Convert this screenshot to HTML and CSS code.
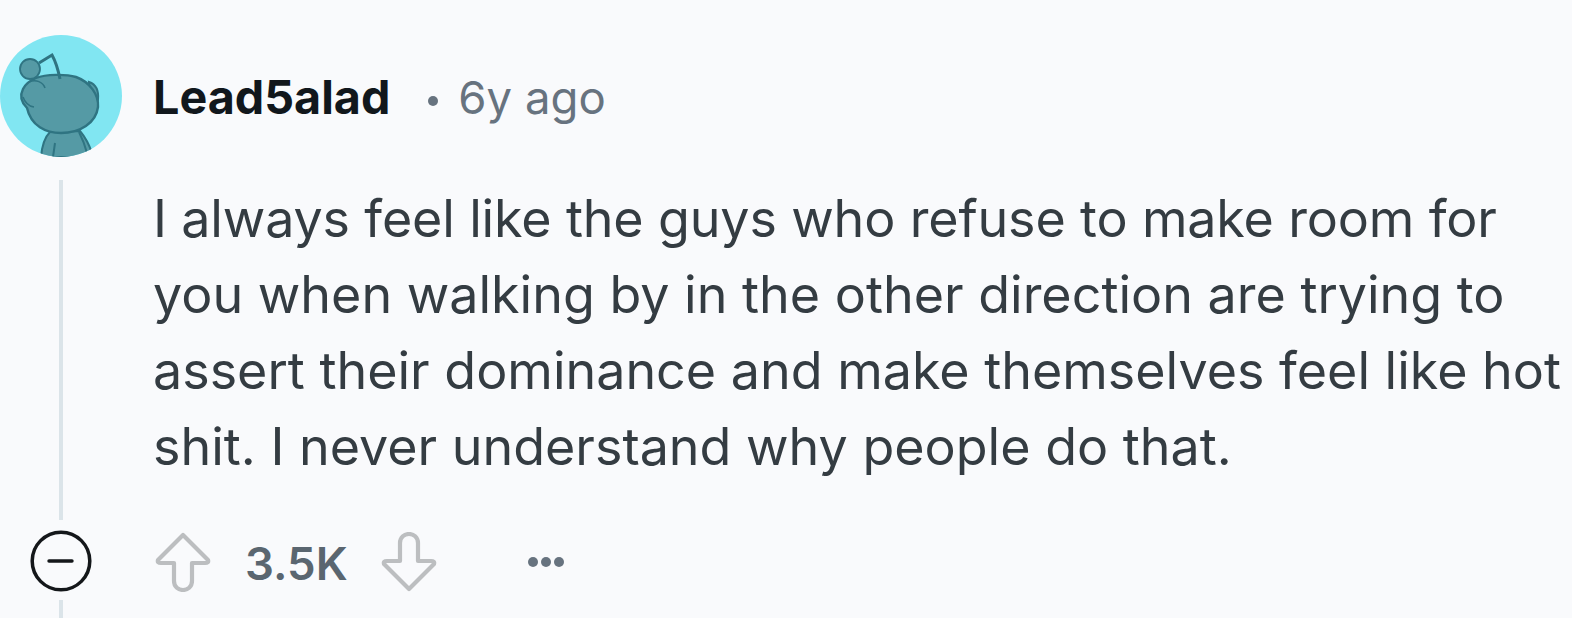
FILE: index.html
```html
<!DOCTYPE html>
<html lang="en">
<head>
<meta charset="utf-8">
<title>Comment</title>
<link rel="stylesheet" href="styles.css">
</head>
<body>
<main class="comment">
  <div class="rail">
    <svg class="avatar" viewBox="0 0 122 122" width="122" height="122">
      <defs><clipPath id="c"><circle cx="61" cy="61" r="61"/></clipPath></defs>
      <g clip-path="url(#c)">
        <rect width="122" height="122" fill="#81e6f2"/>
        <path d="M41 122 C42 110 45 102 50 97 L80 96 C85 102 89 109 92 118 L92 122Z" fill="#559aa5" stroke="#2f7482" stroke-width="2"/>
        <path d="M55 108 L53 122 M79 97 C82 103 85 110 87 118" stroke="#2f7482" stroke-width="2" fill="none"/>
        <path d="M89 47 C95 49 99 55 98 65 L92 72Z" fill="#559aa5" stroke="#2f7482" stroke-width="2"/>
        <path d="M36 43 C46 39 66 39 76 42 C90 47 99 60 98 72 C96 88 80 98 61 98 C46 98 31 91 27 73 C21 67 20 60 23 54 C26 48 31 45 36 43Z" fill="#559aa5" stroke="#2f7482" stroke-width="2.400"/>
        <path d="M29 47 C36 44 43 47 45 53 M23 62 C25 68 28 71 34 72" stroke="#2f7482" stroke-width="1.600" fill="none"/>
        <path d="M39 28 L52 20 Q57 29 60 44" stroke="#2f7482" stroke-width="3" fill="none"/>
        <circle cx="30" cy="34" r="10" fill="#559aa5" stroke="#2f7482" stroke-width="1.800"/>
      </g>
    </svg>
    <div class="thread thread-top"></div>
    <button class="collapse" type="button" aria-label="Collapse">
      <svg viewBox="0 0 62 62" width="62" height="62"><circle cx="31" cy="31" r="28.800" fill="none" stroke="#14171a" stroke-width="3.500"/><path d="M19 31H42" stroke="#14171a" stroke-width="3.400" stroke-linecap="round"/></svg>
    </button>
    <div class="thread thread-bottom"></div>
  </div>
  <div class="body">
    <header class="meta">
      <span class="author">Lead5alad</span>
      <span class="dot"></span>
      <span class="age">6y ago</span>
    </header>
    <p class="text"><span class="first-line">I always feel like the guys who refuse to make room for</span><br>you when walking by in the other direction are trying to<br>assert their dominance and make themselves feel like hot<br>shit. I never understand why people do that.</p>
    <footer class="actions">
      <svg class="vote" viewBox="0 0 56 60" width="56" height="60"><path d="M28 3 L53 28 Q54 31 50 31 H37 V49 C37 61 19 61 19 49 V31 H6 Q2 31 3 28Z" fill="none" stroke="#bcbec0" stroke-width="4.200" stroke-linejoin="round"/></svg>
      <span class="score">3.5K</span>
      <svg class="vote down" viewBox="0 0 56 60" width="56" height="60"><path d="M28 57 L53 32 Q54 29 50 29 H37 V11 C37 -1 19 -1 19 11 V29 H6 Q2 29 3 32Z" fill="none" stroke="#bcbec0" stroke-width="4.200" stroke-linejoin="round"/></svg>
      <div class="more"><span></span><span></span><span></span></div>
    </footer>
  </div>
</main>
</body>
</html>
```
FILE: styles.css
```css
html, body {
  margin: 0;
  padding: 0;
  height: 100%;
  background: #f9fafc;
  overflow: hidden;
}
.comment {
  display: flex;
  padding-top: 35px;
  font-family: Inter, "Liberation Sans", sans-serif;
}
.rail {
  width: 122px;
  flex: none;
  display: flex;
  flex-direction: column;
  align-items: center;
}
.avatar { display: block; flex: none; }
.thread {
  width: 4px;
  background: #dbe4e9;
}
.thread-top { height: 340px; margin-top: 23px; }
.thread-bottom { height: 30px; margin-top: 8px; }
.collapse {
  display: block;
  width: 62px;
  height: 62px;
  margin-top: 10px;
  padding: 0;
  border: 0;
  background: none;
}
.collapse svg { display: block; }
.body { margin-left: 31px; flex: 1; }
.meta {
  display: flex;
  align-items: center;
  height: 52px;
  margin-top: 36px;
}
.author {
  font-size: 46.700px;
  font-weight: 700;
  color: #11171c;
}
.dot {
  width: 10px;
  height: 10px;
  margin: 8px 20px 0 38px;
  border-radius: 50%;
  background: #67737f;
}
.age {
  font-size: 45.500px;
  color: #67737f;
}
.text {
  margin: 58px 0 0;
  font-size: 52px;
  line-height: 76px;
  color: #343c42;
  white-space: nowrap;
}
.first-line { letter-spacing: -0.150px; }
.actions {
  display: flex;
  align-items: center;
  height: 60px;
  margin-top: 47px;
  padding-left: 2px;
}
.score {
  margin-left: 34px;
  padding-top: 2px;
  font-size: 45.500px;
  font-weight: 600;
  color: #5a6670;
}
.vote.down { margin-left: 33px; }
.more {
  display: flex;
  gap: 3px;
  margin-left: 91px;
}
.more span {
  width: 10px;
  height: 10px;
  border-radius: 50%;
  background: #67737f;
}
```
